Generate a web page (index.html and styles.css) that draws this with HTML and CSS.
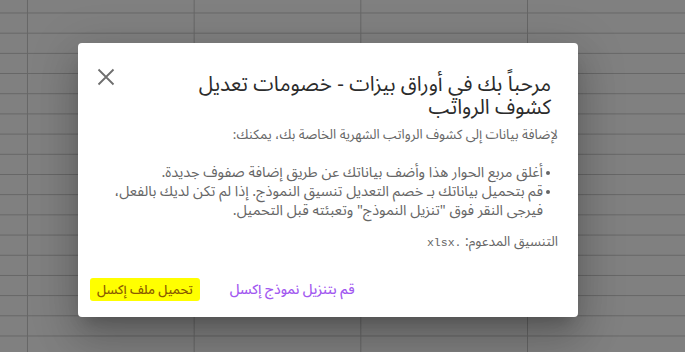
FILE: index.html
```html
<!DOCTYPE html>
<html lang="ar">
<head>
<meta charset="utf-8">
<link rel="stylesheet" href="styles.css">
</head>
<body>
<div class="sheet">
  <div class="dialog" dir="rtl" role="dialog">
    <div class="header">
      <h2 class="title">مرحباً بك في أوراق بيزات - خصومات تعديل كشوف الرواتب</h2>
      <button class="close" aria-label="إغلاق">
        <svg width="18" height="18" viewBox="0 0 18 18"><path d="M1.5 1.5 L16.5 16.5 M16.5 1.5 L1.5 16.5" stroke="#6e6e6e" stroke-width="1.8" fill="none"/></svg>
      </button>
    </div>
    <div class="content">
      <p class="intro">لإضافة بيانات إلى كشوف الرواتب الشهرية الخاصة بك، يمكنك:</p>
      <ul class="list">
        <li>أغلق مربع الحوار هذا وأضف بياناتك عن طريق إضافة صفوف جديدة.</li>
        <li>قم بتحميل بياناتك بـ خصم التعديل تنسيق النموذج. إذا لم تكن لديك بالفعل، فيرجى النقر فوق "تنزيل النموذج" وتعبئته قبل التحميل.</li>
      </ul>
      <p class="format">التنسيق المدعوم: <code>.xlsx</code></p>
    </div>
    <div class="actions">
      <button class="btn link">قم بتنزيل نموذج إكسل</button>
      <button class="btn upload">تحميل ملف إكسل</button>
    </div>
  </div>
</div>
</body>
</html>
```
FILE: styles.css
```css
html, body {
  margin: 0;
  padding: 0;
  width: 685px;
  height: 352px;
  overflow: hidden;
}
.sheet {
  width: 685px;
  height: 352px;
  box-sizing: border-box;
  padding: 43px 0 0 78px;
  background-color: #808080;
  background-image:
    repeating-linear-gradient(to bottom, transparent 0, transparent 12.3px, #666 12.3px, #666 13.3px, transparent 13.3px, transparent 20.19px),
    repeating-linear-gradient(to right, transparent 0, transparent 27px, #666 27px, #666 28px, transparent 28px, transparent 166.7px);
  background-size: 100% 20.19px, 166.7px 100%;
  background-position: 0 0, 0 0;
  font-family: "Noto Sans Arabic", "Noto Sans", "DejaVu Sans", sans-serif;
}
.dialog {
  width: 500px;
  height: 274px;
  box-sizing: border-box;
  background: #fff;
  border-radius: 4px;
  box-shadow: 0 11px 15px -7px rgba(0,0,0,.2), 0 24px 38px 3px rgba(0,0,0,.14), 0 9px 46px 8px rgba(0,0,0,.12);
  padding: 24px 20px 16px 20px;
  display: flex;
  flex-direction: column;
}
.header {
  display: flex;
  align-items: flex-start;
  justify-content: space-between;
}
.title {
  margin: 6px 0 0;
  padding-right: 7px;
  width: 385px;
  font-size: 20.6px;
  line-height: 23px;
  font-weight: 400;
  color: #2b2b2b;
}
.close {
  border: 0;
  background: none;
  padding: 0;
  margin: 1px 0 0 -1px;
  width: 18px;
  height: 18px;
  line-height: 0;
}
.content {
  color: #666;
  font-size: 13.3px;
  line-height: 19px;
}
.intro {
  margin: 7px 0 0;
}
.list {
  list-style: none;
  margin: 18px 0 0 12px;
  padding: 0 15px 0 0;
  font-size: 14.5px;
}
.list li {
  position: relative;
}
.list li::before {
  content: "";
  position: absolute;
  right: -7px;
  top: 8px;
  width: 4px;
  height: 4px;
  border-radius: 50%;
  background: #666;
}
.format {
  margin: 12px 0 0;
  font-size: 13.6px;
}
.format code {
  font-family: "Liberation Mono", "DejaVu Sans Mono", monospace;
  font-size: 11.5px;
}
.actions {
  margin: auto 0 0 -8px;
  display: flex;
  flex-direction: row;
  justify-content: flex-end;
  align-items: center;
  gap: 30px;
}
.btn {
  border: 0;
  background: none;
  font-family: inherit;
  font-weight: 500;
  padding: 2px 7px;
  line-height: 19px;
}
.link {
  color: #a259f0;
  font-size: 13.7px;
  padding: 2px 0;
}
.upload {
  background: #ffff00;
  color: #8a5a00;
  border-radius: 3px;
  font-size: 12.8px;
}
```
